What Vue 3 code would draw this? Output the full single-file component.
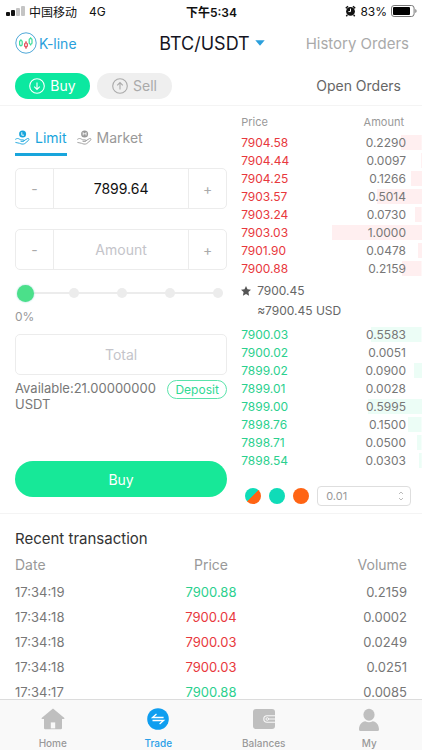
<template>
  <div class="app">
    <div class="status-bar">
      <div class="status-left">
        <span class="signal"><i class="on s1"></i><i class="on s2"></i><i class="s3"></i><i class="s4"></i></span>
        <span>中国移动</span>
        <span class="network">4G</span>
      </div>
      <div class="status-time">下午5:34</div>
      <div class="status-right">
        <svg width="11" height="12" viewBox="0 0 11 12">
          <circle cx="5.5" cy="6.4" r="4.4" fill="#111" />
          <path d="M.8 3.2 3 1.2M10.2 3.2 8 1.2M2.3 10l-1 1.2M8.7 10l1 1.2" stroke="#111" stroke-width="1.5" />
          <path d="M5.5 3.6v3H3.4" stroke="#fff" fill="none" />
        </svg>
        <span>83%</span>
        <svg width="26" height="12" viewBox="0 0 26 12">
          <rect x=".5" y=".5" width="22.6" height="11" rx="2.6" fill="none" stroke="#777" />
          <rect x="2" y="2" width="17" height="8" rx="1" fill="#000" />
          <path d="M24.3 4v4q1.3-.6 1.3-2t-1.3-2z" fill="#777" />
        </svg>
      </div>
    </div>

    <header class="header">
      <a class="kline" href="#kline">
        <svg width="22" height="22" viewBox="0 0 22 22" fill="none">
          <circle cx="11" cy="11" r="10.2" stroke="#4fa8d8" />
          <g stroke="#3ddc9a" stroke-width="1.2">
            <rect x="4.6" y="8.6" width="2.6" height="4.8" rx="1" />
            <path d="M5.9 7.2v1.4M5.9 13.4v1.2" />
            <rect x="14.2" y="6.6" width="2.8" height="5.4" rx="1" />
            <path d="M15.6 5.2v1.4M15.6 12v1.4" />
          </g>
          <g stroke="#e04350" stroke-width="1.2">
            <rect x="9.7" y="11" width="2.6" height="3.8" rx="1" />
            <path d="M11 9.2V11M11 14.8v2" />
          </g>
        </svg>
        <span>K-line</span>
      </a>
      <button class="pair" type="button">
        BTC/USDT
        <svg width="10" height="6" viewBox="0 0 10 6"><path d="M.3.3h9.4L5 5.8z" fill="#2a9fdc" /></svg>
      </button>
      <a class="history" href="#history">History Orders</a>
    </header>

    <div class="side-bar">
      <button class="side buy" type="button">
        <svg width="16" height="16" viewBox="0 0 16 16" fill="none" stroke="currentColor" stroke-width="1.1">
          <circle cx="8" cy="8" r="7.3" />
          <path d="M8 4.4v7M5.2 8.6 8 11.4l2.8-2.8" />
        </svg>
        Buy
      </button>
      <button class="side sell" type="button">
        <svg width="16" height="16" viewBox="0 0 16 16" fill="none" stroke="currentColor" stroke-width="1.1">
          <circle cx="8" cy="8" r="7.3" />
          <path d="M8 11.6v-7M5.2 7.4 8 4.6l2.8 2.8" />
        </svg>
        Sell
      </button>
      <a class="open-orders" href="#open">Open Orders</a>
    </div>

    <main class="content">
      <section class="trade">
        <form class="order" @submit.prevent>
          <div class="types">
            <button
              v-for="t in types"
              :key="t.name"
              type="button"
              :class="['type', { active: type === t.name }]"
              @click="type = t.name"
            >
              <svg width="15" height="15" viewBox="0 0 15 15" fill="none">
                <circle cx="7.6" cy="3.9" r="3.5" fill="currentColor" />
                <path :d="t.mark" stroke="#fff" stroke-width=".9" />
                <path
                  d="M.6 9.2c1.4-1 2.6-.9 3.8-.1l1.4.8h2.4c1.2 0 1.2 1.5 0 1.5H6M8.8 10.8l3.6-2.2c1-.6 2.1.4 1.3 1.3-1.2 1.5-2.6 2.9-4.2 3.8-1.6.8-3.4.3-4.9-.4L.8 12.5"
                  stroke="currentColor"
                  stroke-width=".9"
                  stroke-linecap="round"
                  stroke-linejoin="round"
                />
              </svg>
              {{ t.name }}
            </button>
          </div>

          <div class="stepper">
            <button type="button" aria-label="Decrease price">-</button>
            <input v-model="price" aria-label="Price" />
            <button type="button" aria-label="Increase price">+</button>
          </div>
          <div class="stepper">
            <button type="button" aria-label="Decrease amount">-</button>
            <input v-model="amount" placeholder="Amount" aria-label="Amount" />
            <button type="button" aria-label="Increase amount">+</button>
          </div>

          <div class="slider">
            <div class="marks"><i v-for="n in 5" :key="n"></i></div>
            <input v-model="percent" type="range" min="0" max="100" aria-label="Percent of balance" />
          </div>
          <div class="percent">{{ percent }}%</div>

          <input v-model="total" class="total" placeholder="Total" aria-label="Total" />
          <div class="balance">
            <span>Available:21.00000000 USDT</span>
            <button class="deposit" type="button">Deposit</button>
          </div>
          <button class="submit" type="submit">Buy</button>
        </form>

        <div class="book">
          <table>
            <thead>
              <tr><th>Price</th><th>Amount</th></tr>
            </thead>
            <tbody class="asks">
              <tr v-for="row in asks" :key="row[0]" :style="{ backgroundSize: depth(row) }">
                <td>{{ row[0] }}</td>
                <td>{{ row[1] }}</td>
              </tr>
            </tbody>
            <tbody class="last">
              <tr>
                <td colspan="2">
                  <div class="last-price">
                    <svg width="10" height="10" viewBox="0 0 10 10">
                      <path d="m5 0 1.5 3.3 3.5.4-2.6 2.4.7 3.6L5 7.9 1.9 9.7l.7-3.6L0 3.7l3.5-.4z" fill="#555" />
                    </svg>
                    7900.45
                  </div>
                  <div class="last-usd">≈7900.45 USD</div>
                </td>
              </tr>
            </tbody>
            <tbody class="bids">
              <tr v-for="row in bids" :key="row[0]" :style="{ backgroundSize: depth(row) }">
                <td>{{ row[0] }}</td>
                <td>{{ row[1] }}</td>
              </tr>
            </tbody>
          </table>
          <div class="book-tools">
            <button class="dot both" type="button" aria-label="Show all"></button>
            <button class="dot green" type="button" aria-label="Show bids"></button>
            <button class="dot orange" type="button" aria-label="Show asks"></button>
            <select v-model="step" class="step" aria-label="Price step">
              <option>0.01</option>
              <option>0.1</option>
              <option>1</option>
            </select>
          </div>
        </div>
      </section>

      <section class="recent">
        <h2>Recent transaction</h2>
        <table>
          <thead>
            <tr><th>Date</th><th>Price</th><th>Volume</th></tr>
          </thead>
          <tbody>
            <tr v-for="(row, i) in trades" :key="i">
              <td>{{ row.time }}</td>
              <td :class="row.side">{{ row.price }}</td>
              <td>{{ row.volume }}</td>
            </tr>
          </tbody>
        </table>
      </section>
    </main>

    <nav class="tab-bar">
      <a href="#home">
        <svg width="24" height="22" viewBox="0 0 24 22">
          <path d="M12 .6 23.4 10q.5 1-.8 1H21v9q0 1.2-1.2 1.2H4.2Q3 21.2 3 20v-9H1.4q-1.3 0-.8-1z" fill="#bfbfbf" />
          <path d="M9.8 20.4v-6h4.4v6z" fill="#f9f9f9" />
        </svg>
        Home
      </a>
      <a href="#trade" class="active">
        <svg width="22" height="22" viewBox="0 0 22 22" fill="none">
          <circle cx="11" cy="11" r="10.8" fill="#0f9ef0" />
          <path d="M16.6 9.5H5.5l4-3.5M5.5 12.5h11.1l-4 3.5" stroke="#fff" stroke-width="1.3" />
        </svg>
        Trade
      </a>
      <a href="#balances">
        <svg width="22" height="22" viewBox="0 0 22 22" fill="none">
          <rect x="0" y="1" width="22" height="20" rx="3" fill="#bfbfbf" />
          <path d="M22 7.8h-8a3.2 3.2 0 0 0 0 6.4h8" stroke="#f9f9f9" stroke-width="1.1" />
          <circle cx="14.3" cy="11" r="1.3" stroke="#f9f9f9" />
          <path d="M15.6 11H22" stroke="#f9f9f9" />
        </svg>
        Balances
      </a>
      <a href="#my">
        <svg width="22" height="24" viewBox="0 0 22 24" fill="#bfbfbf">
          <ellipse cx="11" cy="6.8" rx="5.6" ry="6" />
          <path d="M1 21.5C1 16.5 4 13.6 7.2 13.2q3.8 2 7.6 0C18 13.6 21 16.5 21 21.5q0 1.5-1.5 1.5h-17Q1 23 1 21.5z" />
        </svg>
        My
      </a>
    </nav>
  </div>
</template>

<script setup>
import { ref } from 'vue'

const types = [
  { name: 'Limit', mark: 'M6.8 2.2v3H9' },
  { name: 'Market', mark: 'M6.2 5.4V2.6l1.4 1.6L9 2.6v2.8' }
]

const type = ref('Limit')
const price = ref('7899.64')
const amount = ref('')
const percent = ref(0)
const total = ref('')
const step = ref('0.01')

const asks = [
  ['7904.58', '0.2290'],
  ['7904.44', '0.0097'],
  ['7904.25', '0.1266'],
  ['7903.57', '0.5014'],
  ['7903.24', '0.0730'],
  ['7903.03', '1.0000'],
  ['7901.90', '0.0478'],
  ['7900.88', '0.2159']
]

const bids = [
  ['7900.03', '0.5583'],
  ['7900.02', '0.0051'],
  ['7899.02', '0.0900'],
  ['7899.01', '0.0028'],
  ['7899.00', '0.5995'],
  ['7898.76', '0.1500'],
  ['7898.71', '0.0500'],
  ['7898.54', '0.0303']
]

const trades = [
  { time: '17:34:19', price: '7900.88', volume: '0.2159', side: 'up' },
  { time: '17:34:18', price: '7900.04', volume: '0.0002', side: 'down' },
  { time: '17:34:18', price: '7900.03', volume: '0.0249', side: 'down' },
  { time: '17:34:18', price: '7900.03', volume: '0.0251', side: 'down' },
  { time: '17:34:17', price: '7900.88', volume: '0.0085', side: 'up' }
]

// an amount of 1 fills half of the row
const depth = (row) => `${Number(row[1]) * 50}% 15px`
</script>

<style>
body {
  margin: 0;
  background: #fff;
}
</style>

<style scoped>
.app {
  display: flex;
  flex-direction: column;
  height: 100vh;
  font-family: Inter, "Noto Sans CJK SC", sans-serif;
  font-size: 14px;
  color: #777;
}

.app * {
  box-sizing: border-box;
}

button,
input,
select {
  font: inherit;
  color: inherit;
  background: none;
  border: 0;
  border-radius: 0;
  padding: 0;
  margin: 0;
  outline: none;
}

button {
  cursor: pointer;
}

a {
  color: inherit;
  text-decoration: none;
}

svg {
  flex: none;
}

table {
  width: 100%;
  border-collapse: collapse;
}

td,
th {
  padding: 0;
  font-weight: 400;
  text-align: left;
}

/* status bar */
.status-bar {
  display: grid;
  grid-template-columns: 1fr auto 1fr;
  align-items: center;
  height: 22px;
  padding: 0 5px 0 6px;
  font-size: 12px;
  color: #111;
}

.status-left,
.status-right {
  display: flex;
  align-items: center;
  gap: 4px;
}

.status-right {
  justify-content: flex-end;
}

.status-time {
  font-weight: 600;
}

.network {
  margin-left: 8px;
}

.signal {
  display: flex;
  align-items: flex-end;
  gap: 1px;
}

.signal i {
  width: 4px;
  border-radius: 1px;
  background: #c4c4c4;
}

.signal .on {
  background: #111;
}

.s1 { height: 4px; }
.s2 { height: 6px; }
.s3 { height: 8px; }
.s4 { height: 10px; }

/* header */
.header {
  display: grid;
  grid-template-columns: 1fr auto 1fr;
  align-items: center;
  height: 42px;
  padding: 0 13px 0 15px;
}

.kline {
  display: flex;
  align-items: center;
  gap: 2px;
  color: #2a9fdc;
}

.pair {
  display: flex;
  align-items: center;
  gap: 5px;
  font-size: 18px;
  color: #15151f;
}

.history {
  justify-self: end;
  font-size: 15px;
  color: #aaa;
}

.side-bar {
  display: flex;
  align-items: center;
  gap: 7px;
  height: 42px;
  padding: 2px 21px 0 15px;
  border-bottom: 1px solid #f4f4f4;
}

.side {
  display: flex;
  align-items: center;
  justify-content: center;
  gap: 5px;
  width: 75px;
  height: 26px;
  border-radius: 13px;
}

.side.buy {
  background: #0ce8a0;
  color: #fff;
}

.side.sell {
  background: #efefef;
  color: #aaa;
}

.open-orders {
  margin-left: auto;
  color: #666;
}

.content {
  flex: 1;
  min-height: 0;
  overflow: hidden;
}

.trade {
  display: grid;
  grid-template-columns: minmax(0, 4fr) minmax(0, 3fr);
  padding-bottom: 7px;
  border-bottom: 1px solid #f4f4f4;
}

/* order form */
.order {
  display: flex;
  flex-direction: column;
  padding: 16px 14px 0 15px;
}

.types {
  display: flex;
  gap: 10px;
  margin-bottom: 12px;
}

.type {
  display: flex;
  align-items: center;
  gap: 5px;
  height: 34px;
  border-bottom: 3px solid transparent;
  color: #999;
}

.type.active {
  border-color: #18a5dc;
  color: #18a5dc;
}

.stepper {
  display: flex;
  height: 41px;
  margin-bottom: 20px;
  border: 1px solid #ececec;
  border-radius: 5px;
}

.stepper button {
  flex: none;
  width: 37px;
  color: #aaa;
}

.stepper input {
  flex: 1;
  min-width: 0;
  border: solid #ececec;
  border-width: 0 1px;
  text-align: center;
  color: #111;
}

input::placeholder {
  color: #c4c4ca;
  opacity: 1;
}

.slider {
  display: grid;
  align-items: center;
  height: 18px;
  margin: -6px 4px 0 2px;
}

.slider > * {
  grid-area: 1 / 1;
}

.marks {
  display: flex;
  justify-content: space-between;
  align-items: center;
  height: 10px;
  margin-left: 4px;
  background: linear-gradient(#ececec, #ececec) center / 98% 2px no-repeat;
}

.marks i {
  width: 10px;
  height: 10px;
  border-radius: 50%;
  background: #ececec;
}

.slider input {
  appearance: none;
  width: 100%;
  height: 18px;
}

.slider input::-webkit-slider-thumb {
  appearance: none;
  width: 17px;
  height: 17px;
  border-radius: 50%;
  background: #4be08a;
  box-shadow: 0 0 2px #8fd8d0;
}

.percent {
  margin: 7px 0 9px;
  font-size: 12px;
  line-height: 16px;
  color: #999;
}

.total {
  height: 41px;
  border: 1px solid #ececec;
  border-radius: 5px;
  text-align: center;
}

.balance {
  display: flex;
  align-items: flex-start;
  justify-content: space-between;
  gap: 4px;
  margin-top: 5px;
  font-size: 13px;
  line-height: 16px;
}

.deposit {
  flex: none;
  width: 60px;
  height: 19px;
  border: 1px solid #5be3ab;
  border-radius: 10px;
  font-size: 12px;
  line-height: 16px;
  color: #2fd993;
}

.submit {
  height: 36px;
  margin-top: 49px;
  border-radius: 18px;
  background: #17e898;
  color: #fff;
}

/* order book */
.book {
  padding-top: 5px;
  font-size: 12px;
}

.book th {
  height: 22px;
  font-size: 11px;
  color: #999;
}

.book td {
  height: 18px;
}

.book td:last-child,
.book th:last-child {
  padding-right: 16px;
  text-align: right;
}

.book th:last-child {
  padding-right: 18px;
}

.asks tr {
  background: linear-gradient(#ffeff0, #ffeff0) right center no-repeat;
}

.bids tr {
  background: linear-gradient(#ecfdf6, #ecfdf6) right center no-repeat;
}

.asks td:first-child {
  color: #e8383d;
}

.bids td:first-child {
  color: #2bd08e;
}

.last td,
.last td:last-child {
  height: 48px;
  text-align: left;
  line-height: 20px;
  color: #666;
}

.last-price {
  display: flex;
  align-items: center;
  gap: 6px;
}

.last-usd {
  padding-left: 16px;
}

.book-tools {
  display: flex;
  align-items: center;
  gap: 8px;
  padding: 17px 11px 0 4px;
}

.dot {
  flex: none;
  width: 16px;
  height: 16px;
  border-radius: 50%;
}

.dot.green {
  background: #0fdcb8;
}

.dot.orange {
  background: #ff6414;
}

.dot.both {
  background: linear-gradient(135deg, #0fdcb8 50%, #ff6414 50%);
}

.step {
  appearance: none;
  flex: 1;
  min-width: 0;
  height: 20px;
  padding: 0 8px;
  border: 1px solid #dedede;
  border-radius: 4px;
  background: url("data:image/svg+xml,%3Csvg xmlns='http://www.w3.org/2000/svg' width='6' height='10' fill='none' stroke='%23bbb'%3E%3Cpath d='M1 3l2-2 2 2M1 7l2 2 2-2'/%3E%3C/svg%3E") right 6px center no-repeat;
  font-size: 11px;
  color: #999;
}

/* recent trades */
.recent {
  padding: 15px 15px 0;
}

.recent h2 {
  margin: 0;
  font-size: 15px;
  font-weight: 400;
  line-height: 20px;
  color: #333;
}

.recent table {
  table-layout: fixed;
  font-size: 13px;
}

.recent th {
  height: 30px;
  font-size: 14px;
  color: #999;
}

.recent td {
  height: 25px;
}

.recent th:nth-child(2),
.recent td:nth-child(2) {
  text-align: center;
}

.recent th:last-child,
.recent td:last-child {
  text-align: right;
}

.recent .up {
  color: #2bd08e;
}

.recent .down {
  color: #e8383d;
}

/* bottom tabs */
.tab-bar {
  flex: none;
  display: flex;
  height: 51px;
  border-top: 1px solid #dcdcdc;
  background: #f9f9f9;
  font-size: 10px;
  font-weight: 500;
  line-height: 12px;
  color: #999;
}

.tab-bar a {
  flex: 1;
  display: flex;
  flex-direction: column;
  align-items: center;
  justify-content: space-between;
  padding: 8px 0 1px;
}

.tab-bar a.active {
  color: #2a9fe8;
}
</style>
